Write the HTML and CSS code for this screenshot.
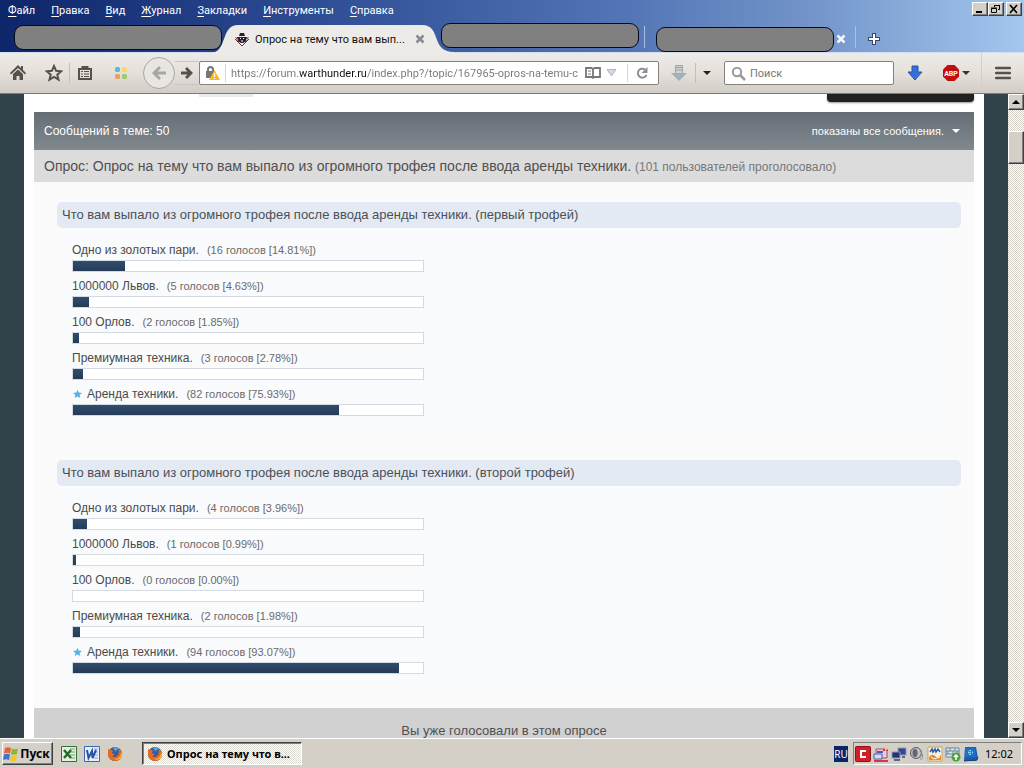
FILE: index.html
```html
<!DOCTYPE html>
<html lang="ru">
<head>
    <meta charset="UTF-8">
    <meta name="viewport" content="width=device-width, initial-scale=1.0">
    <title>Опрос на тему что вам выпало</title>
    <link rel="stylesheet" href="styles.css">
</head>
<body>
    <header class="chrome">
        <div class="menubar">
            <nav class="menu">
                <button><u>Ф</u>айл</button>
                <button><u>П</u>равка</button>
                <button><u>В</u>ид</button>
                <button><u>Ж</u>урнал</button>
                <button><u>З</u>акладки</button>
                <button><u>И</u>нструменты</button>
                <button><u>С</u>правка</button>
            </nav>
            <div class="window-buttons">
                <button class="classic" aria-label="Свернуть"><svg width="12" height="10"><path d="M2 8h6" stroke="#000" stroke-width="2"/></svg></button>
                <button class="classic" aria-label="Восстановить"><svg width="12" height="10"><path d="M4.500 3V1.500h5v4H8M4 1.500h6M1.500 4.500h5v4h-5zM1 4h6" fill="none" stroke="#000"/></svg></button>
                <button class="classic close-window" aria-label="Закрыть"><svg width="12" height="10"><path d="M2 1l7 8M9 1L2 9" stroke="#000" stroke-width="1.700"/></svg></button>
            </div>
        </div>

        <div class="tabs">
            <div class="pill pill-first"></div>
            <div class="tab-active">
                <svg class="tab-shape" viewBox="0 0 244 28" preserveAspectRatio="none"><path d="M0 28C18 28 10 0 28 0H212C232 0 220 27 244 27V28Z" fill="#edebe8"/></svg>
                <svg class="favicon" width="16" height="16" viewBox="0 0 16 16"><path d="M8 1L1 8l7 7 7-7z" fill="#f6eeee"/><path d="M1 8l7 7 7-7" fill="none" stroke="#7a2c33"/><path d="M5 5l1-3h4l1 3zM3 6h10l-1 3 1 1-4 2H7l-4-2 1-1z" fill="#222436"/><path d="M1 6l3 1-1 2zM15 6l-3 1 1 2z" fill="#a33"/><path d="M6 7.500h1M9 7.500h1M7 10h2" stroke="#fff"/></svg>
                <span class="tab-title">Опрос на тему что вам вып...</span>
                <button class="tab-close" aria-label="Закрыть вкладку"><svg width="10" height="10"><path d="M1.500 1.500l7 7M8.500 1.500l-7 7" stroke="#888b93" stroke-width="2.500"/></svg></button>
            </div>
            <div class="pill pill-second"></div>
            <div class="tab-line"></div>
            <div class="pill pill-third"></div>
            <button class="tab-close light" aria-label="Закрыть вкладку"><svg width="10" height="10"><path d="M1.500 1.500l7 7M8.500 1.500l-7 7" stroke="#f4f7ff" stroke-width="2.500"/></svg></button>
            <div class="tab-line"></div>
            <button class="new-tab" aria-label="Новая вкладка"><svg width="14" height="14"><path d="M7 1v12M1 7h12" stroke="#34496c" stroke-width="4"/><path d="M7 2v10M2 7h10" stroke="#fff" stroke-width="2"/></svg></button>
        </div>

        <div class="toolbar">
            <button class="tool" aria-label="Домой"><svg width="16" height="16"><path d="M8 0L0 8l1 1.500L8 3l7 6.500L16 8l-3-3V1h-2v2z" fill="#56524a"/><path d="M3 9l5-4.500L13 9v6H9.500v-4h-3v4H3z" fill="#56524a"/></svg></button>
            <button class="tool" aria-label="В закладки"><svg width="18" height="18"><path d="M9 2l2.100 4.800 5.100.5-3.900 3.400 1.200 5L9 13l-4.500 2.700 1.200-5-3.900-3.400 5.100-.5z" fill="none" stroke="#56524a" stroke-width="2"/></svg></button>
            <span class="tool-line"></span>
            <button class="tool" aria-label="Список закладок"><svg width="16" height="16"><path d="M2 4h12v10H2zM5.500 4V2h5v2" fill="none" stroke="#56524a" stroke-width="2"/><path d="M4 6.500h2M7 6.500h5M4 9h2M7 9h5M4 11.500h2M7 11.500h5" stroke="#56524a"/></svg></button>
            <button class="tool dots" aria-label="Экспресс-панель"><svg width="14" height="14"><rect x="1" y="1" width="5" height="5" rx="1.500" fill="#63b7dc"/><rect x="8" y="1" width="5" height="5" rx="1.500" fill="#f5d76a"/><rect x="1" y="8" width="5" height="5" rx="1.500" fill="#ee9d62"/><rect x="8" y="8" width="5" height="5" rx="1.500" fill="#9ccb69"/></svg></button>
            <button class="back" aria-label="Назад"><svg width="16" height="16"><path d="M1 8l7-7 2 2-3.500 3.500H15v3H6.500L10 13l-2 2z" fill="#a9a5a0"/></svg></button>
            <button class="forward" aria-label="Вперёд"><svg width="14" height="14"><path d="M13 7L7 1 5 3l2.500 2.500H1v3h6.500L5 11l2 2z" fill="#56524a"/></svg></button>
            <div class="field url">
                <svg width="15" height="16"><path d="M3 7V4.500a2.500 2.500 0 015 0V7" fill="none" stroke="#777" stroke-width="2"/><rect x="1" y="6" width="9" height="7" fill="#777"/><path d="M9.500 5L15 15H4z" fill="#fdb813"/><path d="M9.500 8v4M9.500 13v1" stroke="#fff" stroke-width="1.300"/></svg>
                <span class="field-line"></span>
                <input class="address" type="text" aria-label="Адрес" value="https://forum.warthunder.ru/index.php?/topic/167965-opros-na-temu-c">
                <svg width="16" height="14"><path d="M1 2h5.500L8 3l1.500-1H15v9H9.500L8 12l-1.500-1H1zM8 3v9" fill="none" stroke="#77787a" stroke-width="1.800"/><path d="M3 5h3M3 8h3" stroke="#77787a"/></svg>
                <svg class="drop" width="11" height="10"><path d="M1 1.500h9L5.500 8z" fill="#d4d9e3" stroke="#b1b6c0"/></svg>
                <span class="field-line"></span>
                <button class="reload" aria-label="Обновить"><svg width="14" height="14"><path d="M10 3.500A4.500 4.500 0 1011.500 9" fill="none" stroke="#8b9096" stroke-width="2"/><path d="M12.500 1v6h-6z" fill="#8b9096"/></svg></button>
            </div>
            <button class="download-old" aria-label="Скачать видео"><svg width="18" height="18"><path d="M5 8h8v1h4l-8 8-8-8h4z" fill="#9fb0be"/><path d="M5.500 9V1.500h7V9" fill="#cfd2d3" stroke="#a0a4a6"/><path d="M6 3.500h6M6 6h6" stroke="#a0a4a6"/></svg></button>
            <span class="tool-line"></span>
            <button class="arrow-button" aria-label="Варианты"><span class="caret"></span></button>
            <div class="field search">
                <svg width="15" height="15"><circle cx="6" cy="6" r="4.200" fill="none" stroke="#9a9a9a" stroke-width="2"/><path d="M9 9l5 5" stroke="#9a9a9a" stroke-width="2.500"/></svg>
                <input type="text" aria-label="Поиск" placeholder="Поиск">
            </div>
            <button class="tool download" aria-label="Загрузки"><svg width="16" height="16"><path d="M5 1h6v6h4l-7 8-7-8h4z" fill="#376fd9" stroke="#2a55ad"/></svg></button>
            <button class="abp" aria-label="Adblock Plus"><svg width="18" height="18"><path d="M5.500 1h7L17 5.500v7L12.500 17h-7L1 12.500v-7z" fill="#c40d11"/><text x="9" y="12" text-anchor="middle" class="abp-text">ABP</text></svg><span class="caret"></span></button>
            <button class="hamburger" aria-label="Меню"><svg width="16" height="14"><path d="M1 2h14M1 7h14M1 12h14" stroke="#56524a" stroke-width="2.500" stroke-linecap="round"/></svg></button>
        </div>
    </header>

    <div class="viewport">
        <main class="page">
            <div class="topic-buttons">
                <div class="grey-button"></div>
                <div class="black-button"></div>
            </div>
            <div class="topic-bar">
                <span>Сообщений в теме: 50</span>
                <button class="filter">показаны все сообщения. <span class="caret"></span></button>
            </div>
            <h1 class="poll-title">Опрос: Опрос на тему что вам выпало из огромного трофея после ввода аренды техники. <small>(101 пользователей проголосовало)</small></h1>

            <div class="poll">
                <section class="question">
                    <h2>Что вам выпало из огромного трофея после ввода аренды техники. (первый трофей)</h2>
                    <ul>
                        <li><p>Одно из золотых пари. <small>(16 голосов [14.81%])</small></p><div class="bar"><div class="fill" style="width: 14.81%"></div></div></li>
                        <li><p>1000000 Львов. <small>(5 голосов [4.63%])</small></p><div class="bar"><div class="fill" style="width: 4.63%"></div></div></li>
                        <li><p>100 Орлов. <small>(2 голосов [1.85%])</small></p><div class="bar"><div class="fill" style="width: 1.85%"></div></div></li>
                        <li><p>Премиумная техника. <small>(3 голосов [2.78%])</small></p><div class="bar"><div class="fill" style="width: 2.78%"></div></div></li>
                        <li><p><svg class="star" width="11" height="10" viewBox="-1 -1 13 12"><path d="M5.500 0L7 3.300l4 .4-3 2.500.9 3.600-3.400-1.900-3.400 1.900L3 6.200 0 3.700l4-.4z" fill="#58b4e5"/></svg>Аренда техники. <small>(82 голосов [75.93%])</small></p><div class="bar"><div class="fill" style="width: 75.93%"></div></div></li>
                    </ul>
                </section>

                <section class="question">
                    <h2>Что вам выпало из огромного трофея после ввода аренды техники. (второй трофей)</h2>
                    <ul>
                        <li><p>Одно из золотых пари. <small>(4 голосов [3.96%])</small></p><div class="bar"><div class="fill" style="width: 3.96%"></div></div></li>
                        <li><p>1000000 Львов. <small>(1 голосов [0.99%])</small></p><div class="bar"><div class="fill" style="width: 0.99%"></div></div></li>
                        <li><p>100 Орлов. <small>(0 голосов [0.00%])</small></p><div class="bar"><div class="fill" style="width: 0%"></div></div></li>
                        <li><p>Премиумная техника. <small>(2 голосов [1.98%])</small></p><div class="bar"><div class="fill" style="width: 1.98%"></div></div></li>
                        <li><p><svg class="star" width="11" height="10" viewBox="-1 -1 13 12"><path d="M5.500 0L7 3.300l4 .4-3 2.500.9 3.600-3.400-1.900-3.400 1.900L3 6.200 0 3.700l4-.4z" fill="#58b4e5"/></svg>Аренда техники. <small>(94 голосов [93.07%])</small></p><div class="bar"><div class="fill" style="width: 93.07%"></div></div></li>
                    </ul>
                </section>
            </div>
            <p class="poll-footer">Вы уже голосовали в этом опросе</p>
        </main>

        <div class="scrollbar">
            <button class="classic" aria-label="Вверх"><span class="caret up"></span></button>
            <div class="track"><div class="thumb"></div></div>
            <button class="classic" aria-label="Вниз"><span class="caret"></span></button>
        </div>
    </div>

    <footer class="taskbar">
        <button class="start"><svg width="16" height="16" viewBox="0 0 16 16"><path d="M2 2q3-1.500 6 0L7 7.500q-3-1.500-6 0z" fill="#e8622c"/><path d="M9 2.500q3 1.500 6 0L14 8q-3 1.500-6 0z" fill="#8ab92d"/><path d="M1 8.500q3-1.500 6 0L6 14q-3-1.500-6 0z" fill="#3c76d2"/><path d="M8 9q3 1.500 6 0l-1 5.500q-3 1.500-6 0z" fill="#f6c529"/></svg>Пуск</button>
        <div class="quick">
            <button aria-label="Excel"><svg width="16" height="16"><path d="M.5.5h15v15H.5z" fill="#e5f0df" stroke="#2f7234"/><path d="M9 3h5M9 6h5M9 9h5M9 12h5" stroke="#6ea570"/><path d="M3 4l7 8M10 4l-7 8" stroke="#236b2b" stroke-width="2.500"/></svg></button>
            <button aria-label="Word"><svg width="16" height="16"><path d="M.5.5h15v15H.5z" fill="#e8effa" stroke="#3d67b0"/><path d="M10 3h4M10 6h4M10 9h4M10 12h4" stroke="#7f9ed0"/><path d="M3 4l1.500 8L8 5l.5 7L12 4" fill="none" stroke="#2953a3" stroke-width="2"/></svg></button>
            <button aria-label="Firefox"><svg width="16" height="16"><circle cx="8" cy="8" r="7" fill="#2b5da8"/><path d="M6 2q4-2 6 1-3 0-3 3z" fill="#62a4d8"/><path d="M1 3q1 1 2 1 2-1 3 1-1 1-1 2 1 1 3 1-1 2-3 2 3 2 5 0 3-3 1-7 5 2 4 6-1 6-7 6Q1 14 1 8z" fill="#e66a1d"/><path d="M14 6q0 7-7 7 4 2 7-1 2-3 0-6z" fill="#f7b52f"/></svg></button>
        </div>
        <button class="task"><svg width="16" height="16"><circle cx="8" cy="8" r="7" fill="#2b5da8"/><path d="M6 2q4-2 6 1-3 0-3 3z" fill="#62a4d8"/><path d="M1 3q1 1 2 1 2-1 3 1-1 1-1 2 1 1 3 1-1 2-3 2 3 2 5 0 3-3 1-7 5 2 4 6-1 6-7 6Q1 14 1 8z" fill="#e66a1d"/><path d="M14 6q0 7-7 7 4 2 7-1 2-3 0-6z" fill="#f7b52f"/></svg>Опрос на тему что в...</button>
        <span class="lang">RU</span>
        <div class="tray">
            <svg width="16" height="16"><rect x=".5" y=".5" width="15" height="15" rx="1" fill="#d51f27" stroke="#8d1118"/><path d="M11 5H6v6h5" fill="none" stroke="#fff" stroke-width="2"/></svg>
            <svg width="16" height="16"><path d="M3 3h11v9H3z" fill="#f1c9dc" stroke="#a34a77"/><path d="M1 8h8v5H1z" fill="#d6ddf5" stroke="#4a5ab6"/><path d="M1 15h14M10 4h5" stroke="#d03b3b" stroke-width="2"/><path d="M4 6h6" stroke="#4a5ab6" stroke-width="2"/><path d="M12 1l3 2-3 2" fill="#f5cf4f"/></svg>
            <svg width="16" height="16"><path d="M7 2h8v7H7z" fill="#33488f" stroke="#8c97b4"/><path d="M1 6h8v6H1z" fill="#24356f" stroke="#8c97b4"/><path d="M3 14h6M11 11h3" stroke="#596790" stroke-width="2"/></svg>
            <svg width="16" height="16"><circle cx="7" cy="7" r="5.500" fill="#bfc1c4" stroke="#55585e"/><ellipse cx="6" cy="7" rx="2.500" ry="4" fill="#63666c"/><path d="M11 3q3 4 0 9M13.500 8q1 4-2 6" fill="none" stroke="#888b91"/></svg>
            <svg width="16" height="16"><path d="M1 1h14v14H1z" fill="#f7f3e8" stroke="#c6a55d"/><path d="M3 6l2-3 1 3 2-3 1 3 2-3 2 3" fill="none" stroke="#2e5aa8" stroke-width="1.500"/><path d="M2 11q3-4 6-1t6-1v5H2z" fill="#ef8a24"/><path d="M4 11l3 2 6-2" fill="none" stroke="#fff"/></svg>
            <svg width="16" height="16"><path d="M1 2h13v9H1z" fill="#dce8ee" stroke="#66869a"/><path d="M1 5h13M1 8h13M5 2v3M10 2v3M3 5v3M8 5v3M12 5v3" stroke="#66869a"/><circle cx="11" cy="11" r="4.500" fill="#4ea33f"/><path d="M11 14v-5M9 11l2-2 2 2" fill="none" stroke="#fff" stroke-width="1.500"/></svg>
            <svg width="16" height="16"><path d="M2 1h11l2 11-2 3H1z" fill="#1d5eaa"/><path d="M2 2h10l1 9H2z" fill="#1d72c5"/><path d="M7 4v5M5 6.500h5" stroke="#8fd0ef" stroke-dasharray="1 1" stroke-width="2"/><path d="M1 15l13-1 1-3" fill="none" stroke="#153d76"/></svg>
            <time>12:02</time>
        </div>
    </footer>
</body>
</html>
```
FILE: styles.css
```css
* {
    box-sizing: border-box;
}

body {
    margin: 0;
    height: 100vh;
    display: flex;
    flex-direction: column;
    overflow: hidden;
    font-family: "Liberation Sans", Arial, sans-serif;
    color: #4a4a4a;
}

button {
    display: flex;
    align-items: center;
    justify-content: center;
    margin: 0;
    padding: 0;
    border: 0;
    background: none;
    color: inherit;
    font: inherit;
    white-space: nowrap;
}

svg {
    display: block;
    flex: none;
}

/* Browser window */
.chrome {
    flex: none;
    background: linear-gradient(to right, #0d2569, #2d4c94 30%, #5273b4 60%, #7496cb 80%, #a3c7ee);
    font-family: Roboto, Tahoma, sans-serif;
    font-size: 11px;
}

.menubar {
    display: flex;
    justify-content: space-between;
    height: 22px;
    padding: 0 2px 0 8px;
    color: #fff;
}

.menu {
    display: flex;
    gap: 16px;
    height: 20px;
}

.menu u {
    text-underline-offset: 2px;
}

.window-buttons {
    display: flex;
    padding-top: 2px;
}

.classic {
    width: 16px;
    height: 14px;
    background: #d4d0c8;
    border: 1px solid;
    border-color: #fff #404040 #404040 #fff;
    box-shadow: inset -1px -1px #808080;
}

.close-window {
    margin-left: 2px;
}

.tabs {
    display: flex;
    align-items: center;
    height: 31px;
    padding-left: 14px;
    isolation: isolate;
    border-bottom: 1px solid #d5dced;
}

.pill {
    height: 25px;
    background: #808080;
    border: 1px solid #05091c;
    border-radius: 9px;
}

.pill-first {
    width: 208px;
}

.pill-second {
    width: 198px;
    align-self: flex-start;
    margin-top: 1px;
}

.pill-third {
    width: 178px;
    margin-left: 11px;
    align-self: flex-end;
}

.tab-active {
    position: relative;
    display: flex;
    align-items: center;
    width: 219px;
    height: 30px;
    padding: 4px 16px 0 12px;
    color: #111;
}

.tab-shape {
    position: absolute;
    z-index: -1;
    left: -12px;
    bottom: -1px;
    width: 244px;
    height: 28px;
}

.tab-title {
    flex: 1;
    margin-left: 5px;
    white-space: nowrap;
}

.tab-line {
    width: 1px;
    height: 22px;
    margin-left: 5px;
    background: #a9bfe3;
}

.light {
    margin: 4px 4px 0 2px;
}

.new-tab {
    margin: 4px 0 0 11px;
}

.toolbar {
    display: flex;
    align-items: center;
    height: 41px;
    padding: 0 13px 0 10px;
    background: linear-gradient(#edebe8, #e5e0da 50%, #d2ccc7);
    border-bottom: 1px solid #777b82;
}

.tool {
    width: 16px;
}

.tool + .tool {
    margin-left: 20px;
}

.tool-line {
    width: 1px;
    height: 20px;
    margin: 0 7px;
    background: #c3bfba;
}

.back {
    width: 32px;
    height: 32px;
    margin-left: 14px;
    border: 1px solid #aaa7a2;
    border-radius: 50%;
    background: #e9e6e2;
}

.forward {
    width: 24px;
    height: 24px;
    border: solid #c9c5c0;
    border-width: 1px 0;
}

.field {
    display: flex;
    align-items: center;
    height: 24px;
    background: #fff;
    border: 1px solid #85827e;
    border-radius: 2px;
}

.field input {
    flex: 1;
    min-width: 0;
    padding: 0;
    border: 0;
    outline: 0;
    background: none;
    color: #777;
    font: inherit;
}

.field-line {
    width: 1px;
    height: 18px;
    margin: 0 5px;
    background: #d5d5dc;
}

.url {
    flex: 1;
    padding: 0 9px 0 5px;
}

/* the domain part of the address is darker */
.field .address {
    margin-right: 6px;
    background: linear-gradient(to right, #777 67px, #111 67px 135px, #777 135px);
    background-clip: text;
    -webkit-background-clip: text;
    -webkit-text-fill-color: transparent;
}

.drop {
    margin: 0 5px;
}

.reload {
    margin-left: 2px;
}

.download-old {
    margin-left: 11px;
}

.caret {
    border: 4px solid transparent;
    border-top-color: currentColor;
    border-bottom: 0;
}

.caret.up {
    border-bottom: 4px solid currentColor;
    border-top: 0;
}

.arrow-button {
    color: #222;
}

.search {
    width: 170px;
    margin-left: 13px;
    padding: 0 6px;
}

.search input {
    margin-left: 4px;
}

.search input::placeholder {
    color: #777;
}

.download {
    margin-left: 13px;
}

.abp {
    gap: 2px;
    height: 40px;
    margin-left: 19px;
    padding-right: 11px;
    border-right: 1px solid #d3cfca;
    color: #333;
}

.abp-text {
    fill: #fff;
    font-size: 7px;
    font-weight: bold;
}

.hamburger {
    margin-left: 13px;
}

/* Forum page */
.viewport {
    flex: 1;
    min-height: 0;
    display: flex;
    background: #32424b;
}

.page {
    flex: 1;
    min-width: 0;
    margin: 0 24px;
    padding: 0 10px;
    overflow: hidden;
    background: #fff;
}

.topic-buttons {
    display: flex;
    justify-content: space-between;
    height: 18px;
    padding-left: 165px;
}

.grey-button {
    width: 54px;
    height: 3px;
    background: #ebebeb;
}

.black-button {
    width: 147px;
    height: 8px;
    background: #212121;
    border-radius: 0 0 4px 4px;
    box-shadow: 0 1px 2px #999;
}

.topic-bar {
    display: flex;
    align-items: center;
    justify-content: space-between;
    height: 38px;
    padding: 0 14px 0 10px;
    background: linear-gradient(#666d74, #818990);
    color: #fff;
    font-size: 12px;
}

.filter {
    gap: 8px;
    font-size: 11px;
}

.poll-title {
    margin: 0;
    padding: 0 10px;
    background: #dcdcdc;
    color: #505050;
    font-size: 14px;
    font-weight: normal;
    line-height: 32px;
}

.poll-title small {
    color: #777;
    font-size: 12px;
    line-height: 20px;
}

.poll {
    padding: 20px 13px 0 23px;
    background: #fbfbfc;
}

.question {
    padding-bottom: 32px;
}

.question:last-child {
    padding-bottom: 22px;
}

.question h2 {
    margin: 0;
    padding: 0 5px;
    background: #e4eaf3;
    border-radius: 5px;
    color: #4b5057;
    font-size: 13px;
    font-weight: normal;
    line-height: 26px;
}

.question ul {
    margin: 0 7px;
    padding: 12px 8px 8px;
    background: #fafbfd;
    list-style: none;
}

.question li {
    margin-bottom: 4px;
}

.question p {
    display: flex;
    align-items: center;
    margin: 0;
    font-size: 12px;
    line-height: 20px;
}

.question small {
    margin-left: 8px;
    color: #6a6a6a;
    font-size: 11px;
}

.star {
    margin-right: 4px;
}

.bar {
    max-width: 352px;
    height: 12px;
    background: #fff;
    border: 1px solid #d3dae1;
}

.fill {
    height: 100%;
    background: linear-gradient(#304d6d, #243b57);
}

.poll-footer {
    margin: 0;
    background: #d1d1d1;
    color: #505050;
    font-size: 13px;
    line-height: 46px;
    text-align: center;
}

.scrollbar {
    display: flex;
    flex-direction: column;
    width: 16px;
    color: #000;
}

.scrollbar .classic {
    height: 16px;
}

.track {
    flex: 1;
    padding-top: 21px;
    background: repeating-conic-gradient(#fff 0 25%, #d4d0c8 0 50%) 0 0 / 2px 2px;
}

.thumb {
    height: 33px;
    background: #d4d0c8;
    border: 1px solid;
    border-color: #fff #404040 #404040 #fff;
    box-shadow: inset -1px -1px #808080;
}

/* Taskbar */
.taskbar {
    flex: none;
    display: flex;
    align-items: center;
    height: 30px;
    padding: 0 2px;
    background: #d4cfc7;
    border-top: 1px solid #fff;
    color: #000;
    font-family: "Noto Sans", Tahoma, sans-serif;
    font-size: 11px;
}

.start {
    gap: 1px;
    width: 51px;
    height: 23px;
    padding-right: 2px;
    border: 1px solid;
    border-color: #fff #404040 #404040 #fff;
    box-shadow: inset -1px -1px #808080;
    font-size: 12px;
    font-weight: bold;
}

.quick {
    display: flex;
    gap: 7px;
    margin-left: 8px;
}

.task {
    justify-content: flex-start;
    gap: 4px;
    width: 160px;
    height: 23px;
    margin-left: 19px;
    padding-left: 4px;
    background: repeating-conic-gradient(#fff 0 25%, #dedbd5 0 50%) 0 0 / 2px 2px;
    border: 1px solid;
    border-color: #404040 #fff #fff #404040;
    box-shadow: inset 1px 1px #808080;
    font-weight: bold;
}

.lang {
    margin: 0 5px 0 auto;
    background: #0a246a;
    color: #fff;
    font-size: 10px;
    line-height: 16px;
}

.tray {
    display: flex;
    align-items: center;
    gap: 2px;
    height: 23px;
    padding: 0 8px 0 1px;
    border: 1px solid;
    border-color: #808080 #fff #fff #808080;
}

.tray time {
    margin-left: 4px;
}
```
